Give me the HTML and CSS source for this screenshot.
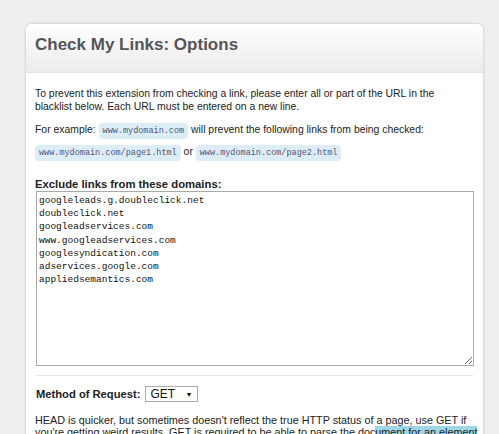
FILE: index.html
```html
<!DOCTYPE html>
<html lang="en">
<head>
    <meta charset="UTF-8">
    <title>Check My Links: Options</title>
    <link rel="stylesheet" href="styles.css">
</head>
<body>
    <div class="card">
        <div class="card-head">
            <h1>Check My Links: Options</h1>
        </div>
        <div class="card-body">
            <p class="intro">To prevent this extension from checking a link, please enter all or part of the URL in the blacklist below. Each URL must be entered on a new line.</p>
            <p class="example">For example: <code>www.mydomain.com</code> will prevent the following links from being checked:</p>
            <p class="example"><code>www.mydomain.com/page1.html</code> or <code>www.mydomain.com/page2.html</code></p>
            <label class="field-label" for="blacklist">Exclude links from these domains:</label>
            <textarea id="blacklist" class="blacklist" spellcheck="false">googleleads.g.doubleclick.net
doubleclick.net
googleadservices.com
www.googleadservices.com
googlesyndication.com
adservices.google.com
appliedsemantics.com</textarea>
            <hr>
            <div class="method">
                <span class="method-label">Method of Request:</span>
                <div class="select">GET <span class="arrow">&#9660;</span></div>
            </div>
            <p class="note">HEAD is quicker, but sometimes doesn't reflect the true HTTP status of a page, use GET if you're getting weird results. GET is required to be able to parse the doc<span class="sel">ument for an element</span></p>
        </div>
    </div>
</body>
</html>
```
FILE: styles.css
```css
*{
    padding: 0;
    margin: 0;
    box-sizing: border-box;
}
body{
    background-color: #efefef;
    font-family: "Liberation Sans", Arial, sans-serif;
    font-size: 10.4px;
    color: #222;
    overflow: hidden;
}
.card{
    width: 459px;
    margin: 23px 0 0 25px;
    background-color: #fff;
    border: 1px solid #dcdcdc;
    border-radius: 7px 7px 0 0;
    box-shadow: 0 0 3px rgba(0,0,0,0.08);
}
.card-head{
    height: 49px;
    padding: 11px 0 0 9px;
    border-radius: 7px 7px 0 0;
    background: linear-gradient(#fefefe, #ececec);
    border-bottom: 1px solid #e4e4e4;
}
.card-head h1{
    font-size: 17px;
    color: #555;
    font-weight: bold;
}
.card-body{
    padding: 14px 10px 0 9px;
}
.intro{
    line-height: 13px;
    margin-bottom: 9px;
}
.example{
    line-height: 16px;
    margin-bottom: 5px;
}
code{
    font-family: "Liberation Mono", monospace;
    font-size: 8.5px;
    color: #557;
    background-color: #dcedf7;
    border-radius: 4px;
    padding: 3px 4px;
}
.field-label{
    display: block;
    font-size: 11.3px;
    font-weight: bold;
    color: #222;
    margin-top: 17px;
}
.blacklist{
    display: block;
    width: 438px;
    height: 175px;
    margin: 1px 0 0 1px;
    padding: 2px 2px;
    border: 1px solid #aaa;
    font-family: "Liberation Mono", monospace;
    font-size: 9.5px;
    line-height: 13.2px;
    color: #111;
    resize: vertical;
}
hr{
    border: none;
    border-top: 1px solid #e6e6e6;
    margin: 9px 0 0 1px;
}
.method{
    display: flex;
    align-items: center;
    gap: 5px;
    margin-top: 10px;
    padding-left: 1px;
}
.method-label{
    font-size: 11.2px;
    font-weight: bold;
}
.select{
    display: flex;
    justify-content: space-between;
    align-items: center;
    width: 53px;
    height: 16px;
    padding: 0 5px 0 4px;
    border: 1px solid #aaa;
    font-size: 12px;
    color: #111;
}
.select .arrow{
    font-size: 7px;
}
.note{
    margin: 12px -16px 0 0;
    line-height: 12px;
    font-size: 10.8px;
}
.sel{
    background-color: #9fd6e6;
}
```
